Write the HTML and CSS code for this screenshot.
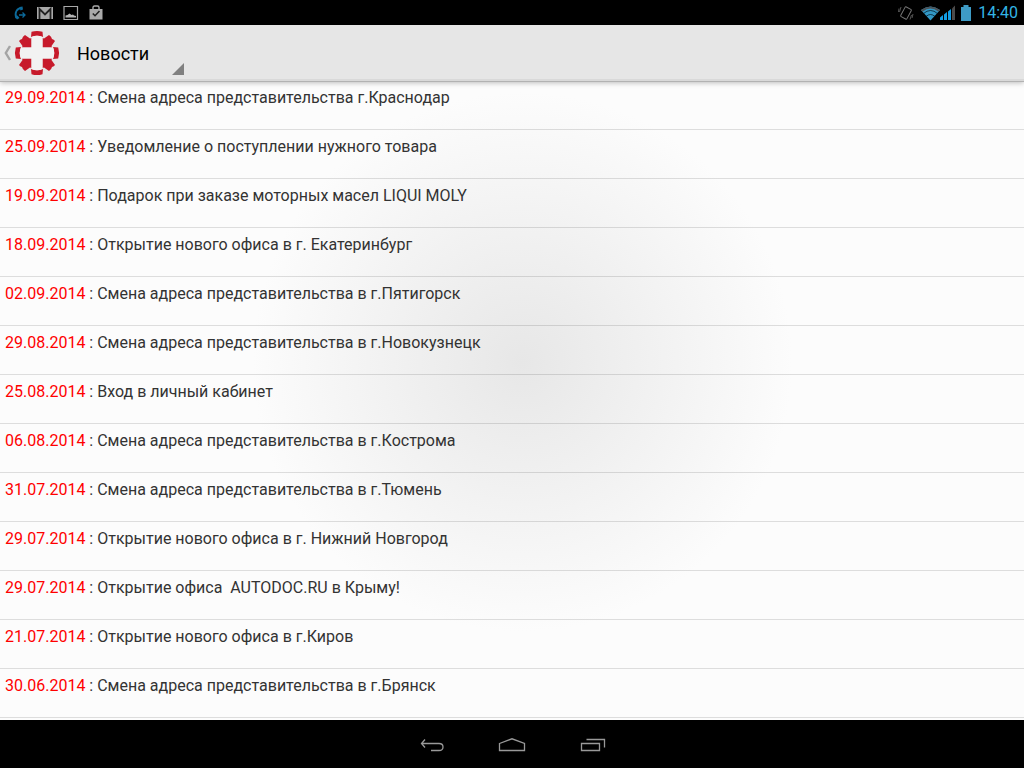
FILE: index.html
```html
<!DOCTYPE html>
<html lang="ru">
<head>
<meta charset="utf-8">
<meta name="viewport" content="width=device-width, initial-scale=1">
<title>Новости</title>
<link rel="stylesheet" href="styles.css">
</head>
<body>
<div class="screen">
  <div class="status-bar">
    <div class="notifications">
      <svg width="14" height="16" viewBox="0 0 14 16" aria-hidden="true"><path d="M8.500 3C4 3 1 8 3.500 13" fill="none" stroke="#0c6999" stroke-width="1.800"/><path d="M6.500 2L9.500 1.500L10 4.500L7.500 5.500zM2 12L4.500 10.500L6.500 13L4 14.500z" fill="#0c6999"/><path d="M6 10h5.500M9.500 7.500l2.500 2.500l-2.500 2.500" fill="none" stroke="#0c6999" stroke-width="1.300"/></svg>
      <svg width="16" height="16" viewBox="0 0 16 16" aria-hidden="true"><path d="M0 2h16v12H0z" fill="#a8a8a8"/><path d="M2.500 14V4L8 9.500L13.500 4V14" fill="none" stroke="#222" stroke-width="1.800"/></svg>
      <svg width="16" height="16" viewBox="0 0 16 16" aria-hidden="true"><path d="M1 1.500h13.500v13H1z" fill="none" stroke="#a8a8a8" stroke-width="1.200"/><path d="M2.500 12.500V10.500L4.500 10L6.500 8.500L8.500 10L10 9.500L11 10.500L13 11V12.500z" fill="#b4b4b4"/></svg>
      <svg width="14" height="16" viewBox="0 0 14 16" aria-hidden="true"><path d="M.5 4h13v10.500H.5z" fill="#aaa"/><path d="M4 4V2.500Q4 1 5.500 1H8.500Q10 1 10 2.500V4" fill="none" stroke="#aaa" stroke-width="1.400"/><path d="M3.800 8.500L6 10.700L10.500 6" fill="none" stroke="#222" stroke-width="1.600"/></svg>
    </div>
    <div class="indicators">
      <svg width="16" height="18" viewBox="0 0 16 18" aria-hidden="true"><g fill="none" stroke="#777"><rect x="4.500" y="3.500" width="7" height="11" rx="1" transform="rotate(28 8 9)"/><path d="M1 4.500L.5 8M3 3L1.500 8M15 10L14 14M13.500 11L12 15.500" stroke="#555"/></g></svg>
      <svg class="wifi" width="19" height="16" viewBox="0 0 19 16" aria-hidden="true"><path d="M0 5Q9.500-2 19 5L9.500 15.500z" fill="#3398c6"/><path d="M0 5Q9.500-2 19 5L17.500 6.800Q9.500.3 1.500 6.800z" fill="#4c5358"/><path d="M2.500 8.500Q9.500 2.500 16.500 8.500M5 11.500Q9.500 7.500 14 11.500" fill="none" stroke="#001018" stroke-width=".7"/></svg>
      <svg class="signal" width="16" height="16" viewBox="0 0 16 16" aria-hidden="true"><g fill="#129de4"><path d="M0 15V12.500L3 10V15zM4 15V9.500L7 7V15zM8 15V6.500L11 4V15z"/></g><path d="M12 15V3.500L15 .5V15z" fill="#4b4b4b"/></svg>
      <svg class="battery" width="10" height="16" viewBox="0 0 10 16" aria-hidden="true"><path d="M0 2H2.500V0H7.500V2H10V16H0z" fill="#3e9bc5"/></svg>
      <time class="clock">14:40</time>
    </div>
  </div>
  <header class="action-bar">
    <button class="home" type="button" aria-label="Назад">
      <svg width="8" height="16" viewBox="0 0 8 16" aria-hidden="true"><path d="M6 1L1.800 8L6 15" fill="none" stroke="#a4a4a4" stroke-width="2.400"/></svg>
      <svg width="46" height="46" viewBox="0 0 46 46" aria-hidden="true"><g fill="#c71a2b"><path d="M17.500 1.800Q23 0 28.500 1.800L29 7Q23 4.500 17 7zM17.500 44.200Q23 46 28.500 44.200L29 39Q23 41.500 17 39zM1.800 17.500Q0 23 1.800 28.500L7 29Q4.500 23 7 17zM44.200 17.500Q46 23 44.200 28.500L39 29Q41.500 23 39 17z"/><path d="M11 5L16 8.500L17.500 8V17.500H8L8.500 16L5 11Q6 9.500 8 9Q8.500 6.500 11 5z"/><path d="M35 5L30 8.500L28.500 8V17.500H38L37.500 16L41 11Q40 9.500 38 9Q37.500 6.500 35 5z"/><path d="M11 41L16 37.500L17.500 38V28.500H8L8.500 30L5 35Q6 36.500 8 37Q8.500 39.500 11 41z"/><path d="M35 41L30 37.500L28.500 38V28.500H38L37.500 30L41 35Q40 36.500 38 37Q37.500 39.500 35 41z"/></g><path d="M17.500 7Q23 4.500 28.500 7V17.500H39Q41.500 23 39 28.500H28.500V39Q23 41.500 17.500 39V28.500H7Q4.500 23 7 17.500H17.500z" fill="#f2f2f2"/></svg>
    </button>
    <div class="spinner"><select class="section" aria-label="Раздел"><option>Новости</option></select></div>
  </header>
  <main class="content">
    <ul class="news">
      <li><a href="#"><time>29.09.2014</time> : Смена адреса представительства г.Краснодар</a></li>
      <li><a href="#"><time>25.09.2014</time> : Уведомление о поступлении нужного товара</a></li>
      <li><a href="#"><time>19.09.2014</time> : Подарок при заказе моторных масел LIQUI MOLY</a></li>
      <li><a href="#"><time>18.09.2014</time> : Открытие нового офиса в г. Екатеринбург</a></li>
      <li><a href="#"><time>02.09.2014</time> : Смена адреса представительства в г.Пятигорск</a></li>
      <li><a href="#"><time>29.08.2014</time> : Смена адреса представительства в г.Новокузнецк</a></li>
      <li><a href="#"><time>25.08.2014</time> : Вход в личный кабинет</a></li>
      <li><a href="#"><time>06.08.2014</time> : Смена адреса представительства в г.Кострома</a></li>
      <li><a href="#"><time>31.07.2014</time> : Смена адреса представительства в г.Тюмень</a></li>
      <li><a href="#"><time>29.07.2014</time> : Открытие нового офиса в г. Нижний Новгород</a></li>
      <li><a href="#"><time>29.07.2014</time> : Открытие офиса&nbsp; AUTODOC.RU в Крыму!</a></li>
      <li><a href="#"><time>21.07.2014</time> : Открытие нового офиса в г.Киров</a></li>
      <li><a href="#"><time>30.06.2014</time> : Смена адреса представительства в г.Брянск</a></li>
    </ul>
  </main>
  <nav class="nav-bar">
    <button type="button" aria-label="Назад"><svg width="28" height="20" viewBox="0 0 28 20" aria-hidden="true"><path d="M7 4.500L3.500 8.500L7 12.500M3.500 8.500H21Q25 8.500 25 12T21 15.500H13" fill="none" stroke="#999" stroke-width="1.300"/></svg></button>
    <button type="button" aria-label="Домой"><svg width="28" height="20" viewBox="0 0 28 20" aria-hidden="true"><path d="M1.500 8.500L14 3.800L26.500 8.500V15.500H1.500z" fill="none" stroke="#999" stroke-width="1.300"/></svg></button>
    <button type="button" aria-label="Недавние"><svg width="28" height="20" viewBox="0 0 28 20" aria-hidden="true"><path d="M3.500 8.500H21.500V15.500H3.500zM8.500 4.500H26.500V12.500" fill="none" stroke="#999" stroke-width="1.300"/></svg></button>
  </nav>
</div>
</body>
</html>
```
FILE: styles.css
```css
* { box-sizing: border-box; }

body {
  margin: 0;
  font-family: Roboto, "Noto Sans", sans-serif;
  font-size: 16px;
  color: #333;
  background: #000;
}

button, select { font: inherit; border: 0; background: none; }

svg { display: block; flex: none; }

.screen { display: flex; flex-direction: column; height: 100vh; }

.status-bar {
  display: flex;
  justify-content: space-between;
  align-items: center;
  flex: none;
  height: 25px;
  padding: 0 6px 0 13px;
  background: #000;
}

.notifications { display: flex; align-items: center; gap: 10px; }

.indicators { display: flex; align-items: center; }

.wifi { margin-left: 7px; }
.battery { margin: 0 7px 0 5px; }
.clock { color: #33b5e5; line-height: 24px; }

.action-bar {
  display: flex;
  flex: none;
  height: 56px;
  background: #e6e6e6;
  border-bottom: 2px solid #d9d9d9;
  box-shadow: 0 1px 0 #b2b2b2, 0 2px 5px rgba(0, 0, 0, .25);
  z-index: 1;
}

.home { display: flex; align-items: center; gap: 2px; padding: 1px 0 0 4px; }

.spinner { position: relative; width: 112px; height: 50px; margin-left: 12px; }

.spinner::after {
  content: "";
  position: absolute;
  right: 0;
  bottom: 0;
  width: 12px;
  height: 12px;
  background: #808080;
  clip-path: polygon(100% 0, 100% 100%, 0 100%);
  pointer-events: none;
}

.section {
  appearance: none;
  width: 100%;
  height: 100%;
  padding: 7px 16px 0 5px;
  font-size: 18px;
  color: #000;
}

.content {
  flex: 1;
  min-height: 0;
  overflow: hidden;
  background: radial-gradient(circle 270px at 51% 44%, #e7e7e7, #fcfcfc) #fcfcfc;
}

.news { list-style: none; margin: 0; padding: 0; }

.news a {
  display: block;
  height: 49px;
  padding: 5px;
  line-height: 24px;
  color: #333;
  text-decoration: none;
  border-bottom: 1px solid rgba(0, 0, 0, .12);
}

.news time { color: #f00; }

.nav-bar { display: flex; justify-content: center; flex: none; height: 48px; background: #000; }

.nav-bar button { display: flex; align-items: center; justify-content: center; width: 80px; padding: 1px 0 0; }
```
